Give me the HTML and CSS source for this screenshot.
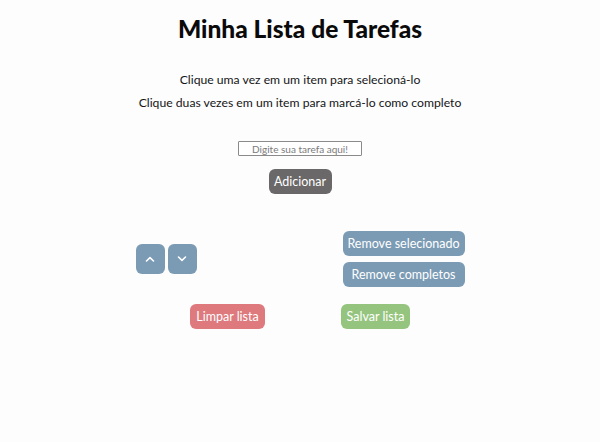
FILE: index.html
```html
<!DOCTYPE html>
<html lang="pt-BR">
<head>
<meta charset="utf-8">
<title>Minha Lista de Tarefas</title>
<link rel="stylesheet" href="styles.css">
</head>
<body>
<main class="app">
  <h1 class="title">Minha Lista de Tarefas</h1>
  <p class="hint">Clique uma vez em um item para selecioná-lo</p>
  <p class="hint">Clique duas vezes em um item para marcá-lo como completo</p>
  <input class="task-input" type="text" placeholder="Digite sua tarefa aqui!">
  <button class="btn btn-gray">Adicionar</button>
  <ol class="task-list"></ol>
  <div class="row controls">
    <div class="arrows">
      <button class="btn btn-blue btn-arrow" aria-label="Mover para cima">
        <svg width="10" height="6" viewBox="0 0 10 6"><path d="M1.5 5 L5 1.6 L8.5 5" fill="none" stroke="#fff" stroke-width="1.6" stroke-linecap="round" stroke-linejoin="round"/></svg>
      </button>
      <button class="btn btn-blue btn-arrow" aria-label="Mover para baixo">
        <svg width="10" height="6" viewBox="0 0 10 6"><path d="M1.5 1 L5 4.4 L8.5 1" fill="none" stroke="#fff" stroke-width="1.6" stroke-linecap="round" stroke-linejoin="round"/></svg>
      </button>
    </div>
    <div class="removes">
      <button class="btn btn-blue">Remove selecionado</button>
      <button class="btn btn-blue">Remove completos</button>
    </div>
  </div>
  <div class="row footer">
    <button class="btn btn-red">Limpar lista</button>
    <button class="btn btn-green">Salvar lista</button>
  </div>
</main>
</body>
</html>
```
FILE: styles.css
```css
* { box-sizing: border-box; }
html, body { margin: 0; padding: 0; background: #fdfdfe; }
body { font-family: Lato, "Open Sans", sans-serif; color: #111; }
.app {
  display: flex;
  flex-direction: column;
  align-items: center;
  padding-top: 14px;
}
.title {
  margin: 0;
  font-size: 24.5px;
  font-weight: 900;
  line-height: 30px;
  color: #0a0a0a;
}
.hint {
  margin: 0;
  font-size: 12.2px;
  line-height: 23px;
  color: #151515;
}
.title + .hint { margin-top: 24px; }
.task-input {
  margin-top: 27px;
  width: 124px;
  height: 15px;
  border: 1px solid #8a8a8a;
  border-radius: 1px;
  padding: 0;
  font-family: inherit;
  font-size: 10px;
  text-align: center;
  background: #fff;
}
.task-input::placeholder { color: #7a7a7a; }
.btn {
  border: none;
  border-radius: 6px;
  color: #fff;
  font-family: inherit;
  font-size: 12.5px;
  height: 25px;
  padding: 0 7px;
  white-space: nowrap;
  cursor: pointer;
  display: inline-flex;
  align-items: center;
  justify-content: center;
}
.btn-gray { background: #6a6868; margin-top: 13px; width: 63px; }
.btn-blue { background: #7b9bb4; }
.btn-red { background: #de797d; }
.btn-green { background: #95c47e; }
.task-list { margin: 0; padding: 0; height: 37px; }
.row { display: flex; align-items: center; justify-content: center; }
.controls { gap: 146px; }
.arrows { display: flex; gap: 3px; }
.btn-arrow { width: 29px; height: 30px; padding: 0; }
.removes { display: flex; flex-direction: column; gap: 6px; }
.removes .btn { width: 122px; }
.footer { margin-top: 17px; gap: 76px; }
.btn-red { width: 75px; }
.btn-green { width: 69px; }
```
